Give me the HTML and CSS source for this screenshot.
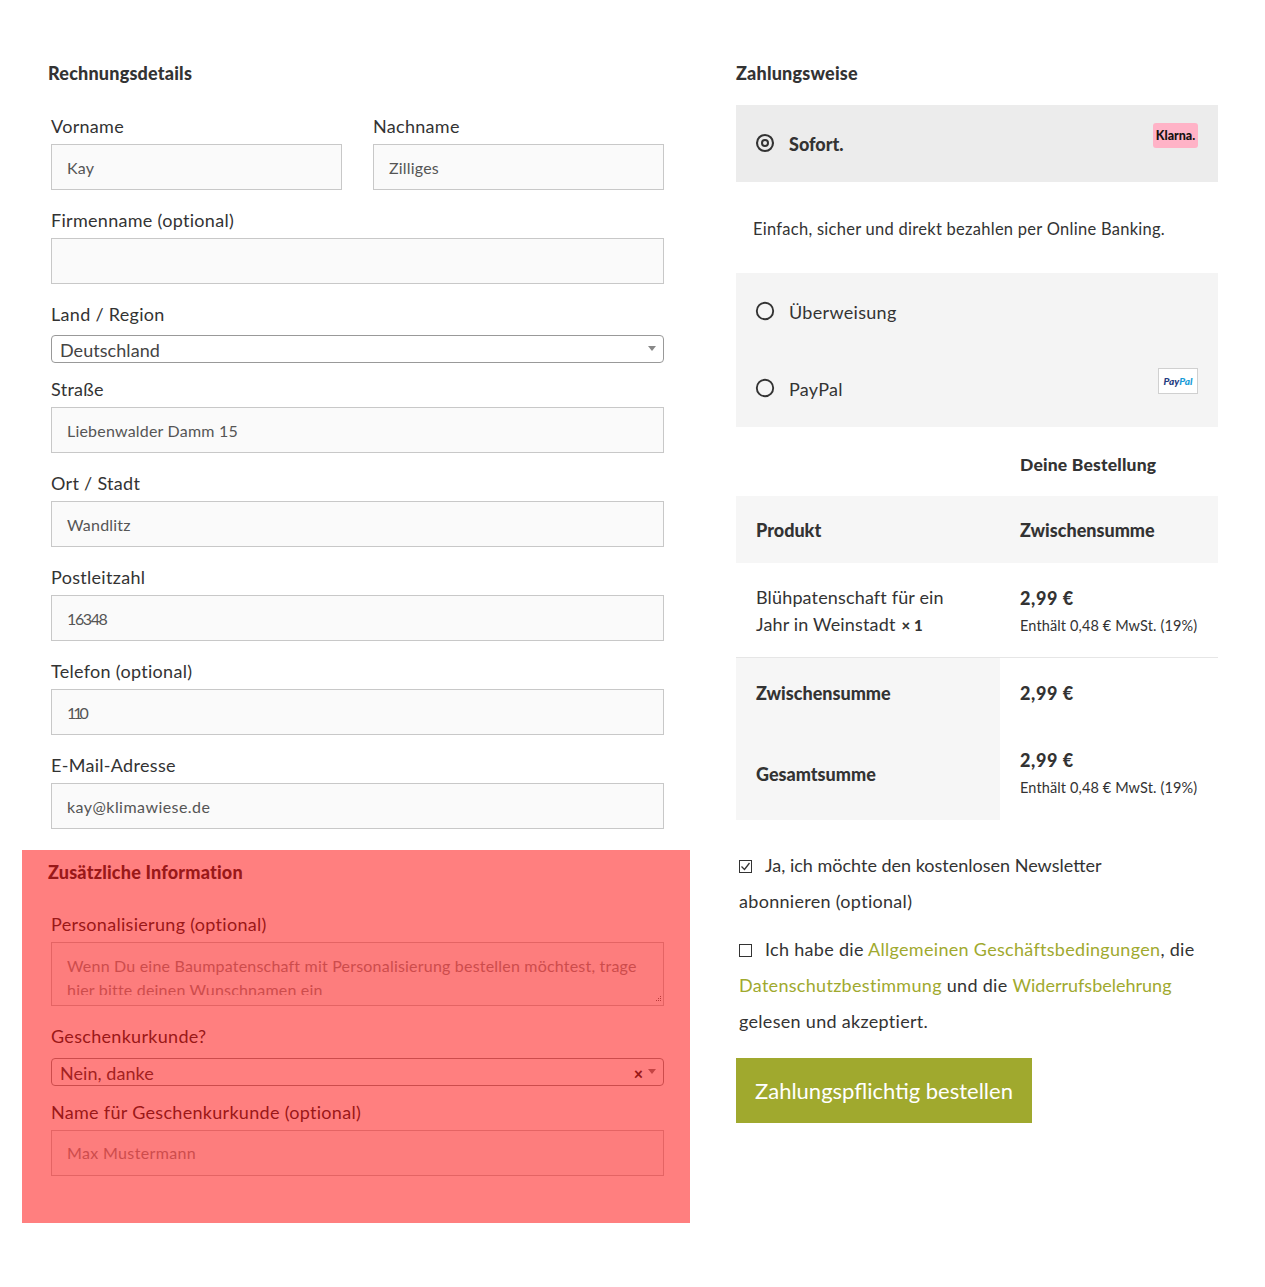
FILE: index.html
```html
<!DOCTYPE html>
<html lang="de">
<head>
<meta charset="utf-8">
<title>Kasse</title>
<link rel="stylesheet" href="styles.css">
</head>
<body>
<div class="checkout">
  <div class="col-left">
    <section class="billing">
      <h3 class="heading">Rechnungsdetails</h3>
      <div class="row-two">
        <div class="field"><label class="label">Vorname</label><div class="input">Kay</div></div>
        <div class="field"><label class="label">Nachname</label><div class="input">Zilliges</div></div>
      </div>
      <div class="field"><label class="label">Firmenname (optional)</label><div class="input"></div></div>
      <div class="field field-select"><label class="label">Land / Region</label>
        <div class="select"><span>Deutschland</span><i class="caret"></i></div></div>
      <div class="field"><label class="label">Straße</label><div class="input">Liebenwalder Damm 15</div></div>
      <div class="field"><label class="label">Ort / Stadt</label><div class="input">Wandlitz</div></div>
      <div class="field"><label class="label">Postleitzahl</label><div class="input input-num">16348</div></div>
      <div class="field"><label class="label">Telefon (optional)</label><div class="input input-short">110</div></div>
      <div class="field"><label class="label">E-Mail-Adresse</label><div class="input input-mail">kay@klimawiese.de</div></div>
    </section>
    <section class="additional">
      <h3 class="heading heading-add">Zusätzliche Information</h3>
      <div class="field"><label class="label">Personalisierung (optional)</label>
        <div class="textarea"><div class="ta-text">Wenn Du eine Baumpatenschaft mit Personalisierung bestellen möchtest, trage hier bitte deinen Wunschnamen ein</div>
          <svg class="grip" width="9" height="9" viewBox="0 0 9 9"><path d="M7 1h1v1H7zM5 3h1v1H5zM7 3h1v1H7zM3 5h1v1H3zM5 5h1v1H5zM7 5h1v1H7z" fill="#777"/></svg>
        </div></div>
      <div class="field field-select"><label class="label">Geschenkurkunde?</label>
        <div class="select select-tall"><span>Nein, danke</span><b class="clear">×</b><i class="caret"></i></div></div>
      <div class="field"><label class="label">Name für Geschenkurkunde (optional)</label><div class="input placeholder">Max Mustermann</div></div>
    </section>
  </div>
  <div class="col-right">
    <h3 class="heading">Zahlungsweise</h3>
    <div class="method method-active">
      <svg class="radio" width="20" height="20" viewBox="0 0 20 20"><circle cx="10" cy="10" r="8" fill="none" stroke="#333" stroke-width="2.1"/><circle cx="10" cy="10" r="3" fill="none" stroke="#333" stroke-width="2"/></svg>
      <span class="method-name strong">Sofort.</span>
      <span class="klarna">Klarna.</span>
    </div>
    <p class="method-desc">Einfach, sicher und direkt bezahlen per Online Banking.</p>
    <div class="methods">
      <div class="method">
        <svg class="radio" width="20" height="20" viewBox="0 0 20 20"><circle cx="10" cy="10" r="8.2" fill="none" stroke="#333" stroke-width="1.9"/></svg>
        <span class="method-name">Überweisung</span>
      </div>
      <div class="method">
        <svg class="radio" width="20" height="20" viewBox="0 0 20 20"><circle cx="10" cy="10" r="8.2" fill="none" stroke="#333" stroke-width="1.9"/></svg>
        <span class="method-name">PayPal</span>
        <span class="paypal"><em class="pp-a">Pay</em><em class="pp-b">Pal</em></span>
      </div>
    </div>
    <h3 class="heading order-heading">Deine Bestellung</h3>
    <table class="order">
      <colgroup><col class="c1"><col class="c2"></colgroup>
      <thead><tr><th>Produkt</th><th>Zwischensumme</th></tr></thead>
      <tbody>
        <tr class="item">
          <td class="item-name"><span class="item-line">Blühpatenschaft für ein</span><span>Jahr in Weinstadt</span><b class="qty">× 1</b></td>
          <td class="item-price"><b class="price">2,99 €</b><small class="tax">Enthält 0,48 € MwSt. (19%)</small></td>
        </tr>
      </tbody>
      <tfoot>
        <tr class="sub"><th>Zwischensumme</th><td><b class="price">2,99 €</b></td></tr>
        <tr class="total"><th>Gesamtsumme</th><td><b class="price">2,99 €</b><small class="tax">Enthält 0,48 € MwSt. (19%)</small></td></tr>
      </tfoot>
    </table>
    <div class="terms">
      <p class="check-line"><span class="box"><svg width="13" height="13" viewBox="0 0 13 13"><path d="M2.5 6.5l3 3 5-6.5" fill="none" stroke="#333" stroke-width="1.3"/></svg></span><span class="tight">Ja, ich möchte den kostenlosen Newsletter</span><br>abonnieren (optional)</p>
      <p class="check-line"><span class="box"></span>Ich habe die <a href="#">Allgemeinen Geschäftsbedingungen</a>, die <a href="#">Datenschutzbestimmung</a> und die <a href="#" class="tight">Widerrufsbelehrung</a> gelesen und akzeptiert.</p>
    </div>
    <button class="submit" type="button">Zahlungspflichtig bestellen</button>
  </div>
</div>
</body>
</html>
```
FILE: styles.css
```css
* { box-sizing: border-box; }
html, body { margin: 0; padding: 0; background: #fff; }
body {
  font-family: Lato, "Open Sans", sans-serif;
  font-size: 18px;
  letter-spacing: .3px;
  color: #333;
  height: 1287px;
  overflow: hidden;
}
.checkout {
  display: flex;
  padding: 55px 0 0 22px;
  align-items: flex-start;
}
.col-left { width: 668px; flex: none; }
.col-right { width: 482px; flex: none; margin-left: 46px; }
.billing { padding: 0 26px; height: 795px; }
.heading {
  margin: 0;
  font-size: 18px;
  letter-spacing: .2px;
  line-height: 36px;
  font-weight: 900;
  color: #333;
}
.billing > .heading { margin-bottom: 19px; }
.field { padding-left: 3px; margin-bottom: 14px; }
.billing .field:last-child { margin-bottom: 0; }
.field-select { margin-bottom: 10px; }
.row-two { display: flex; gap: 31px; padding-left: 3px; }
.row-two .field { flex: 1; padding-left: 0; }
.label { display: block; line-height: 32px; padding-bottom: 2px; font-size: 18px; color: #333; }
.input {
  height: 46px;
  border: 1px solid #c8c8c8;
  background: #fafafa;
  padding: 0 15px;
  font-size: 16px;
  letter-spacing: .2px;
  line-height: 46px;
  color: #555;
}
.input-num { letter-spacing: -1.4px; }
.input-short { letter-spacing: -3px; }
.input-mail { letter-spacing: .45px; }
.placeholder { color: #999; letter-spacing: .35px; line-height: 44px; }
.select {
  display: flex;
  align-items: center;
  height: 28px;
  margin-top: 3px;
  border: 1px solid #999;
  border-radius: 4px;
  background: #fff;
  padding: 0 8px;
  font-size: 18px;
  letter-spacing: .05px;
  line-height: 30px;
  color: #444;
  position: relative;
}
.select-tall { margin-top: 4px; }
.select span { flex: 1; padding-top: 2px; }
.caret {
  width: 0; height: 0;
  border-left: 4px solid transparent;
  border-right: 4px solid transparent;
  border-top: 5px solid #888;
  margin-right: -1px;
  margin-top: -2px;
}
.clear { font-size: 16px; font-weight: 900; line-height: 14px; margin-right: 5px; margin-top: 3px; color: #333; }
.additional {
  position: relative;
  height: 373px;
  padding: 4px 26px 0;
}
.additional::after {
  content: "";
  position: absolute;
  inset: 0;
  background: rgba(255, 0, 0, .5);
}
.heading-add { margin-bottom: 18px; }
.textarea {
  position: relative;
  height: 64px;
  border: 1px solid #c8c8c8;
  background: #fafafa;
  padding: 11px 15px 0;
  font-size: 16px;
  letter-spacing: .2px;
  line-height: 24px;
  color: #999;
}
.ta-text { height: 41px; overflow: hidden; }
.grip { position: absolute; right: 1px; bottom: 1px; }
.method {
  position: relative;
  display: flex;
  align-items: center;
  height: 77px;
  padding: 0 20px;
}
.method-active { background: #ececec; margin-top: 14px; }
.methods { background: #f4f4f4; }
.radio { flex: none; margin-top: -1px; margin-left: -1px; }
.method-name { margin-left: 14px; font-size: 18px; }
.strong { font-weight: 900; font-size: 18px; letter-spacing: 0; margin-top: 1px; margin-left: 14px; }
.klarna {
  position: absolute;
  right: 20px;
  top: 18px;
  width: 45px;
  height: 25px;
  background: #ffb3c7;
  border-radius: 3px;
  font-size: 12.5px;
  letter-spacing: 0;
  font-weight: 900;
  line-height: 25px;
  text-align: center;
  color: #17120f;
}
.paypal {
  position: absolute;
  right: 20px;
  top: 18px;
  width: 40px;
  height: 26px;
  background: #fff;
  border: 1px solid #d0d0d0;
  font-size: 10px;
  letter-spacing: 0;
  font-weight: 900;
  line-height: 24px;
  text-align: center;
}
.paypal em { font-style: italic; }
.pp-a { color: #253b80; }
.pp-b { color: #179bd7; }
.method-desc {
  margin: 0;
  height: 91px;
  padding: 0 17px;
  font-size: 16.5px;
  letter-spacing: .27px;
  line-height: 94px;
}
.order-heading { padding-left: 284px; margin-top: 20px; margin-bottom: 13px; font-size: 17.5px; letter-spacing: .2px; }
.order {
  width: 482px;
  table-layout: fixed;
  border-collapse: collapse;
  font-size: 18px;
}
.c1 { width: 264px; }
.order th, .order td { padding: 0 20px; text-align: left; vertical-align: middle; }
.order th { letter-spacing: 0; }
.order thead th { height: 67px; background: #f6f6f6; font-weight: 900; }
.item td { height: 94px; border-bottom: 1px solid #e6e6e6; line-height: 27px; }
.order .item-name { padding-top: 4px; letter-spacing: .15px; }
.item-line { display: block; }
.order .item-price { padding-top: 4px; }
.qty { font-weight: 900; font-size: 15px; margin-left: 6px; }
.price { display: block; font-weight: 900; line-height: 27px; letter-spacing: .6px; }
.tax { display: block; font-size: 14.5px; letter-spacing: .12px; line-height: 27px; white-space: nowrap; }
.order tfoot th { background: #f6f6f6; font-weight: 900; }
.sub th, .sub td { height: 70px; }
.total th, .total td { height: 93px; }
.order .sub th { padding-top: 2px; }
.order .sub td { vertical-align: top; padding-top: 22px; }
.order .total td { padding-top: 1px; }
.terms { padding: 27px 3px 0; }
.check-line { margin: 0 0 12px; font-size: 18px; line-height: 36px; }
.tight { letter-spacing: 0; }
.box {
  display: inline-flex;
  width: 13px;
  height: 13px;
  border: 1px solid #333;
  margin-right: 13px;
  vertical-align: -1px;
}
.box svg { margin: -1px; }
.check-line a { color: #a0a92e; text-decoration: none; }
.submit {
  display: block;
  width: 296px;
  height: 65px;
  margin-top: 19px;
  border: 0;
  padding: 0;
  background: #a0a92e;
  color: #fff;
  font-family: inherit;
  font-size: 22px;
  letter-spacing: 0;
}
```
